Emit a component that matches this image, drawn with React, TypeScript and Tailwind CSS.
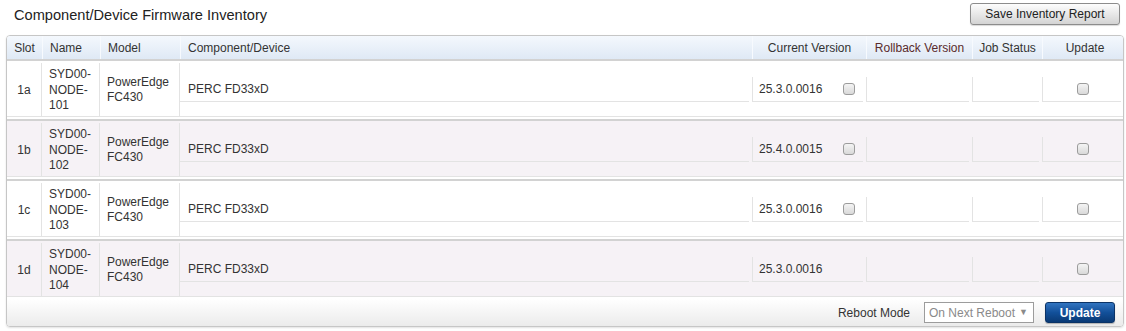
import React from 'react';

interface Row {
  slot: string;
  name: string;
  version: string;
  rollbackBox: boolean;
  shaded: boolean;
}

const rows: Row[] = [
  { slot: '1a', name: '101', version: '25.3.0.0016', rollbackBox: true, shaded: false },
  { slot: '1b', name: '102', version: '25.4.0.0015', rollbackBox: true, shaded: true },
  { slot: '1c', name: '103', version: '25.3.0.0016', rollbackBox: true, shaded: false },
  { slot: '1d', name: '104', version: '25.3.0.0016', rollbackBox: false, shaded: true },
];

const Checkbox: React.FC = () => (
  <span className="inline-block w-[12px] h-[12px] rounded-[3px] border border-[#9c9c9c] bg-gradient-to-b from-[#f4f4f4] to-[#d9d9d9]" />
);

const App: React.FC = () => {
  return (
    <div className="w-[1126px] h-[331px] bg-white font-['Liberation_Sans',Arial,sans-serif] text-[12px] text-[#333]">
      <div className="flex justify-between items-start h-[35px] pl-[14px] pr-[6px]">
        <h1 className="pt-[6px] leading-[18px] text-[14.6px] text-[#222]">Component/Device Firmware Inventory</h1>
        <button className="mt-[3px] w-[150px] h-[22px] rounded-[3px] border border-[#8c8c8c] bg-gradient-to-b from-[#fdfdfd] to-[#d4d4d4] text-[12px] text-[#222] leading-none shadow-[0_1px_1px_rgba(0,0,0,0.15)]">
          Save Inventory Report
        </button>
      </div>

      <div className="ml-[6px] w-[1118px] border border-[#c6c6c6] rounded-[4px] overflow-hidden shadow-[0_1px_2px_rgba(0,0,0,0.12)]">
        {/* header */}
        <div className="flex h-[23px] items-stretch bg-gradient-to-b from-[#f4f8fd] to-[#dfe9f5] leading-[24px]">
          <div className="w-[35px] text-center">Slot</div>
          <div className="w-[58px] border-l border-[#f7fafe] pl-[7px]">Name</div>
          <div className="w-[80px] border-l border-[#f7fafe] pl-[7px]">Model</div>
          <div className="flex-1 border-l border-[#f7fafe] pl-[7px]">Component/Device</div>
          <div className="w-[114px] border-l border-[#f7fafe] text-center">Current Version</div>
          <div className="w-[106px] border-l border-[#f7fafe] text-center text-[#5a2b2b]">Rollback Version</div>
          <div className="w-[70px] border-l border-[#f7fafe] text-center">Job Status</div>
          <div className="w-[81px] border-l border-[#f7fafe] text-center pl-[4px]">Update</div>
        </div>

        {rows.map((r) => (
          <div key={r.slot} className="border-t-2 border-[#d2d2d2] pb-[2px] bg-white">
            <div className={`flex h-[56px] pt-[2px] border-b border-[#e3e3e3] ${r.shaded ? 'bg-[#f6f2f6]' : 'bg-white'}`}>
              <div className="w-[35px] border-r border-[#e3e3e3] flex items-center justify-center">{r.slot}</div>
              <div className="w-[58px] border-r border-[#e3e3e3] flex items-center pl-[7px] leading-[15.5px] pt-[2px]">
                <div>SYD00-<br />NODE-<br />{r.name}</div>
              </div>
              <div className="w-[80px] border-r border-[#e3e3e3] flex items-center pl-[7px] leading-[15px]">
                <div>PowerEdge<br />FC430</div>
              </div>
              <div className="flex-1 flex items-center pr-[2px]">
                <div className="flex w-full h-[25px]">
                  <div className="flex-1 border-b border-[#e3e3e3] flex items-center pl-[8px]">PERC FD33xD</div>
                  <div className="w-[114px] pl-[3px] flex">
                    <div className="flex-1 border-l border-b border-[#e3e3e3] flex items-center pl-[6px]">
                      <span className="w-[84px]">{r.version}</span>
                      {r.rollbackBox && <Checkbox />}
                    </div>
                  </div>
                  <div className="w-[106px] pl-[3px] flex">
                    <div className="flex-1 border-l border-b border-[#e3e3e3]" />
                  </div>
                  <div className="w-[70px] pl-[3px] flex">
                    <div className="flex-1 border-l border-b border-[#e3e3e3]" />
                  </div>
                  <div className="w-[82px] pl-[3px] flex">
                    <div className="flex-1 border-l border-b border-[#e3e3e3] flex items-center justify-center pl-[2px]">
                      <Checkbox />
                    </div>
                  </div>
                </div>
              </div>
            </div>
          </div>
        ))}

        {/* footer */}
        <div className="flex items-center justify-end h-[27px] pr-[8px] bg-gradient-to-b from-[#ffffff] to-[#ebebeb]">
          <span className="mr-[14px] text-[#333] pt-[1px]">Reboot Mode</span>
          <div className="mr-[11px] w-[110px] h-[21px] border border-[#9c9c9c] bg-white flex items-center justify-between pl-[4px] pr-[5px] text-[#8a8a8a]">
            <span>On Next Reboot</span>
            <span className="text-[9px] text-[#8a8a8a]">▼</span>
          </div>
          <button className="w-[70px] h-[21px] rounded-[3px] border border-[#0b3366] bg-gradient-to-b from-[#3174c0] via-[#12509a] to-[#0a3a75] text-white font-bold text-[12px] leading-none shadow-[0_1px_1px_rgba(0,0,0,0.25)]">
            Update
          </button>
        </div>
      </div>
    </div>
  );
};

export default App;
